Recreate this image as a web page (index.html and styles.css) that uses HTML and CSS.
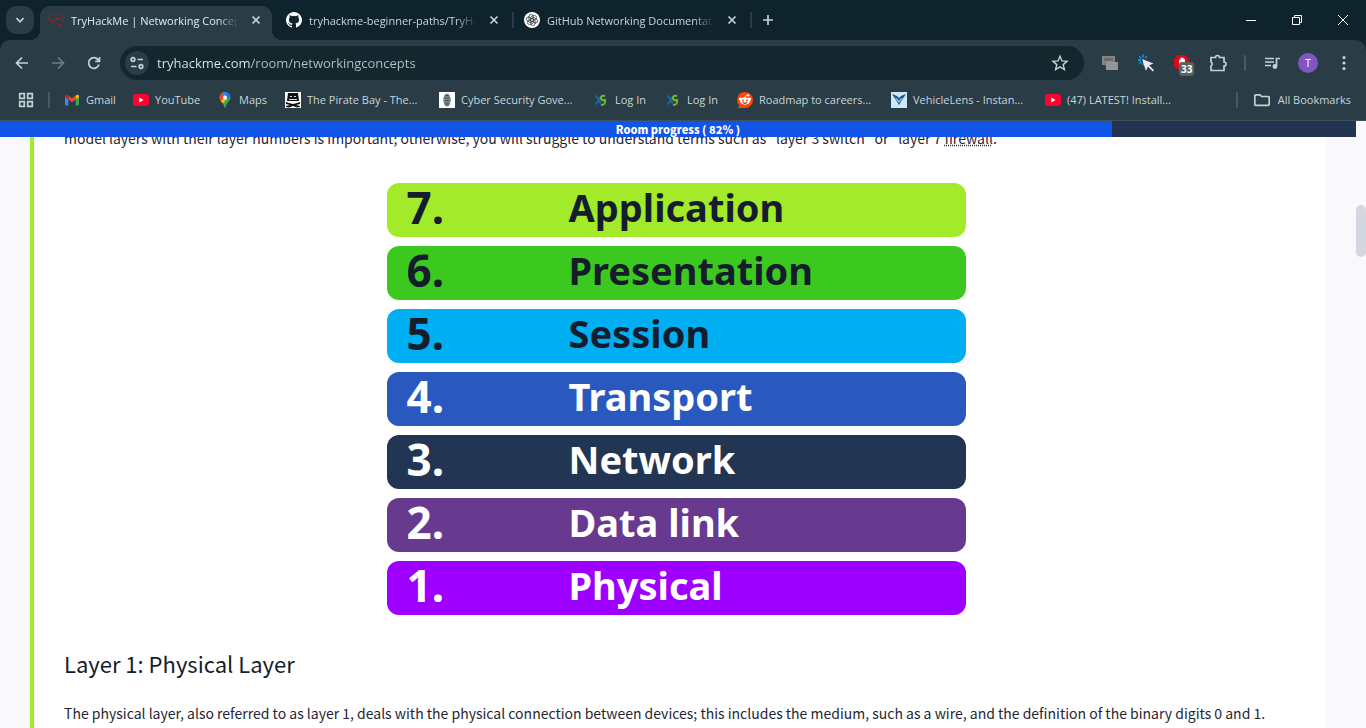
FILE: index.html
```html
<!DOCTYPE html>
<html lang="en">
<head>
<meta charset="utf-8">
<title>TryHackMe | Networking Concepts</title>
<link rel="stylesheet" href="styles.css">
</head>
<body>
<header class="browser">
  <div class="tabstrip">
    <button class="tab-search" aria-label="Search tabs"><svg width="20" height="20" viewBox="0 0 20 20" class="line bold"><path d="M6.500 8.200 10 11.800l3.500-3.600"/></svg></button>
    <div class="tabs">
      <div class="tab active">
        <svg width="16" height="16" viewBox="0 0 16 16" fill="none" stroke="#8f2630" stroke-width="1"><path d="M1 8C-.2 5.500 1.800 3.500 4 4c1-3.500 6.500-3.500 7.500 0 3-.5 5 2 3.500 5M1 8h8M3 10.500h3M8 10.500l2 1M7 6.500h5l3 3M10 12.500h2M12 14.500l3 .5"/></svg>
        <span class="tab-title">TryHackMe | Networking Concepts</span>
        <button class="close" aria-label="Close tab"><svg width="16" height="16" viewBox="0 0 16 16" class="line bold"><path d="m4.500 4.500 7 7m0-7-7 7"/></svg></button>
      </div>
      <div class="tab">
        <svg width="16" height="16" viewBox="0 0 16 16" fill="#fff"><path d="M8 0a8 8 0 0 0-2.530 15.590c.4.070.55-.17.55-.38v-1.490c-2.230.48-2.700-.95-2.700-.95-.36-.92-.89-1.170-.89-1.170-.73-.5.060-.49.060-.49.800.060 1.230.830 1.230.830.710 1.220 1.870.870 2.330.660.070-.52.280-.87.500-1.070-1.770-.2-3.640-.89-3.640-3.950 0-.87.310-1.590.820-2.150-.08-.2-.36-1.020.080-2.120 0 0 .670-.21 2.200.820a7.600 7.600 0 0 1 4 0c1.530-1.030 2.200-.82 2.200-.82.440 1.100.160 1.920.080 2.120.510.560.820 1.280.820 2.150 0 3.070-1.870 3.750-3.650 3.950.290.250.540.730.540 1.480v2.190c0 .21.150.46.550.38A8 8 0 0 0 8 0"/></svg>
        <span class="tab-title">tryhackme-beginner-paths/TryHackMe</span>
        <button class="close" aria-label="Close tab"><svg width="16" height="16" viewBox="0 0 16 16" class="line bold"><path d="m4.500 4.500 7 7m0-7-7 7"/></svg></button>
      </div>
      <div class="tab">
        <svg width="16" height="16" viewBox="0 0 16 16"><circle cx="8" cy="8" r="8" fill="#fff"/><g fill="none" stroke="#222" stroke-width=".7"><path id="petal" d="M6.700 8.700V5.200l2.500-1.500a2.300 2.300 0 0 1 3.200 3L9.300 8.500"/><use href="#petal" transform="rotate(60 8 8)"/><use href="#petal" transform="rotate(120 8 8)"/><use href="#petal" transform="rotate(180 8 8)"/><use href="#petal" transform="rotate(240 8 8)"/><use href="#petal" transform="rotate(300 8 8)"/></g></svg>
        <span class="tab-title">GitHub Networking Documentation</span>
        <button class="close" aria-label="Close tab"><svg width="16" height="16" viewBox="0 0 16 16" class="line bold"><path d="m4.500 4.500 7 7m0-7-7 7"/></svg></button>
      </div>
      <button class="new-tab" aria-label="New tab"><svg width="16" height="16" viewBox="0 0 16 16" class="line bold"><path d="M8 3v10M3 8h10"/></svg></button>
    </div>
    <div class="window-controls">
      <button aria-label="Minimize"><svg width="12" height="12" viewBox="0 0 12 12" class="thin"><path d="M1 6.500h10"/></svg></button>
      <button aria-label="Restore"><svg width="12" height="12" viewBox="0 0 12 12" class="thin"><path d="M1.500 3.500h7v7h-7zM3.500 3.500v-2h7v7h-2"/></svg></button>
      <button aria-label="Close"><svg width="12" height="12" viewBox="0 0 12 12" class="thin"><path d="m1 1 10 10M11 1 1 11"/></svg></button>
    </div>
  </div>

  <div class="toolbar">
    <button aria-label="Back"><svg width="16" height="16" viewBox="0 0 16 16" class="line bold"><path d="M14 8H3M8 2.500 2.500 8 8 13.500"/></svg></button>
    <button aria-label="Forward" disabled><svg width="16" height="16" viewBox="0 0 16 16" class="line bold dim"><path d="M2 8h11M8 2.500 13.500 8 8 13.500"/></svg></button>
    <button aria-label="Reload"><svg width="16" height="16" viewBox="0 0 16 16" class="line bold"><path d="M13 9.500A5.300 5.300 0 1 1 12 4.600l1.300 1.400M13.500 2v4.300H9.200"/></svg></button>
    <div class="omnibox">
      <button class="site-info" aria-label="Site information"><svg width="16" height="16" viewBox="0 0 16 16" class="line bold"><circle cx="4" cy="4.500" r="1.800"/><path d="M8.500 4.500H14M2 11.500h5.500"/><circle cx="12" cy="11.500" r="1.800"/></svg></button>
      <input type="text" class="url" aria-label="Address" value="tryhackme.com/room/networkingconcepts">
      <button class="star" aria-label="Bookmark this page"><svg width="18" height="18" viewBox="0 0 18 18" class="line"><path d="m9 2.200 2 4.700 5.100.4-3.900 3.300 1.200 5L9 12.900l-4.400 2.700 1.200-5-3.900-3.300 5.100-.4z"/></svg></button>
    </div>
    <div class="extensions">
      <button aria-label="Windows extension"><svg width="16" height="14" viewBox="0 0 16 14"><path fill="#858585" d="M0 0h13v9H0z"/><path fill="#6b6b6b" d="M2 2h9v3H2z"/><path fill="#959595" d="M5 5h4l1 1h6v8H4V6z"/><path stroke="#777" d="M3.500 5v5M9 4.500h4"/></svg></button>
      <button aria-label="Click extension"><svg width="18" height="18" viewBox="0 0 18 18"><path d="M6 .5v3M1 6h3M2.300 2.300l2 2M9.700 2.300l-1.500 2M2.300 9.700l2-2M6 9v2.500" stroke="#1689df" stroke-width="1.800"/><path d="m5 5 11.500 4.500-4.300 1.800 4.800 5-1.200 1.200-4.900-5L9 17z" fill="#e9edf7"/></svg></button>
      <button class="blocker" aria-label="Ad blocker, 33 blocked"><svg width="18" height="18" viewBox="0 0 18 18"><path fill="#e30613" d="M5 1h7l4 4v7l-4 4H5l-4-4V5z"/><path fill="#fff" d="M6 12V6q1-1 1.500 0V4q1-1 1.500 0 1-1 1.500 0v1q1-.5 1.500.5V12l-2 2H8z"/></svg><span class="badge">33</span></button>
      <button aria-label="Extensions"><svg width="18" height="18" viewBox="0 0 18 18" class="line bold"><path d="M2 3.500h4.500a2 2 0 0 1 4 0H15V8a2 2 0 0 1 0 4v4.500H2V12a2.300 2.300 0 0 0 0-4z"/></svg></button>
      <span class="divider"></span>
      <button aria-label="Media controls"><svg width="16" height="16" viewBox="0 0 16 16" class="line bold"><path d="M1 3.500h9M1 7h9M1 10.500h6M12.500 11V3.500H16"/><circle cx="10.900" cy="11.500" r="1.600" fill="#c4d2d8"/></svg></button>
      <button aria-label="Profile"><span class="avatar">T</span></button>
      <button aria-label="Menu"><svg width="4" height="16" viewBox="0 0 4 16" fill="#c4d2d8"><circle cx="2" cy="2.500" r="1.600"/><circle cx="2" cy="8" r="1.600"/><circle cx="2" cy="13.500" r="1.600"/></svg></button>
    </div>
  </div>

  <nav class="bookmarks" aria-label="Bookmarks">
    <button class="apps" aria-label="Apps"><svg width="16" height="16" viewBox="0 0 16 16" class="line bold"><path d="M1.700 1.700h4.600v4.600H1.700zM9.700 1.700h4.600v4.600H9.700zM1.700 9.700h4.600v4.600H1.700zM9.700 9.700h4.600v4.600H9.700z"/></svg></button>
    <span class="divider"></span>
    <div class="bookmark-list">
      <a href="#"><svg width="16" height="16" viewBox="0 0 16 16"><path fill="#4285f4" d="M1 4.500l3.300 2.500v6.500H2a1 1 0 0 1-1-1z"/><path fill="#34a853" d="M15 4.500 11.700 7v6.500H14a1 1 0 0 0 1-1z"/><path fill="#ea4335" d="M4.300 3.500 8 6.300l3.700-2.800V7.500L8 10.300 4.300 7.500z"/><path fill="#c5221f" d="M1 4.200C1 2.500 2.700 2.200 4.300 3.500v4L1 5z"/><path fill="#fbbc04" d="M15 4.200c0-1.700-1.700-2-3.300-.7v4L15 5z"/></svg><span>Gmail</span></a>
      <a href="#"><svg width="16" height="16" viewBox="0 0 16 16"><rect y="2" width="16" height="12" rx="3" fill="#ff0033"/><path fill="#fff" d="M6.300 5.500v5l4.200-2.500z"/></svg><span>YouTube</span></a>
      <a href="#"><svg width="16" height="16" viewBox="0 0 16 16"><defs><clipPath id="pin"><path d="M8 0a5.500 5.500 0 0 0-5.500 5.600C2.500 9.500 7 11 7.300 15.300q.7 1.200 1.400 0C9 11 13.500 9.500 13.500 5.600A5.500 5.500 0 0 0 8 0"/></clipPath></defs><g clip-path="url(#pin)"><path fill="#34a853" d="M0 0h16v16H0z"/><path fill="#4285f4" d="M5 0h11L8 7z"/><path fill="#1a73e8" d="M9 0h5v4L8 8z"/><path fill="#ea4335" d="M0 0h5l3 5-5 5z"/><path fill="#fbbc04" d="m8 5-5 5 2 2 5-5z"/><circle cx="8" cy="5.500" r="2" fill="#fff"/></g></svg><span>Maps</span></a>
      <a href="#"><svg width="16" height="16" viewBox="0 0 16 16"><path fill="#fff" d="M0 0h16v16H0z"/><path fill="#111" d="M3 1h10l1 8H2zM1 10l3 1 4 1 4-1 3-1v2l-4 1 4 1v1l-3 .5-4-1.500-4 1.500L1 15v-1l4-1-4-1z"/><path fill="#ddd" d="M5 4h2v1H5zM9 4h2v1H9zM4 7h8v1H4z"/></svg><span>The Pirate Bay - The...</span></a>
      <a href="#"><svg width="16" height="16" viewBox="0 0 16 16"><path fill="#fff" d="M0 0h16v16H0z"/><ellipse cx="8" cy="8" rx="3.800" ry="6.500" fill="#7d8b90"/><path stroke="#3c4c51" fill="none" d="M6.500 3.500h3M5.500 6h5M6 8.500h4M7 10.500v3M9 10.500v3"/></svg><span>Cyber Security Gove...</span></a>
      <a href="#"><svg width="16" height="16" viewBox="0 0 16 16" fill="none" stroke-width="2"><path stroke="#1767ae" d="M2.500 3.500 6 8l-3.500 4.500M8 4.500 5.500 8 8 12"/><path stroke="#75b72b" d="M12 4Q8 3 8 6t4 2q1 5-4 5"/></svg><span>Log In</span></a>
      <a href="#"><svg width="16" height="16" viewBox="0 0 16 16" fill="none" stroke-width="2"><path stroke="#1767ae" d="M2.500 3.500 6 8l-3.500 4.500M8 4.500 5.500 8 8 12"/><path stroke="#75b72b" d="M12 4Q8 3 8 6t4 2q1 5-4 5"/></svg><span>Log In</span></a>
      <a href="#"><svg width="16" height="16" viewBox="0 0 16 16"><path fill="#ff4500" d="M8 0a8 8 0 1 1 0 16H.5l2-2.300A8 8 0 0 1 8 0"/><circle cx="3.400" cy="7" r="1.600" fill="#fff"/><circle cx="12.600" cy="7" r="1.600" fill="#fff"/><circle cx="11" cy="3.300" r="1.200" fill="#fff"/><path d="M8 5.500q0-2 2-2.200" stroke="#fff" stroke-width=".8" fill="none"/><ellipse cx="8" cy="9" rx="5" ry="3.700" fill="#fff"/><circle cx="6" cy="8.500" r="1" fill="#ff4500"/><circle cx="10" cy="8.500" r="1" fill="#ff4500"/><path d="M5.800 10.600q2.200 1.400 4.400 0" stroke="#222" fill="none"/></svg><span>Roadmap to careers...</span></a>
      <a href="#"><svg width="16" height="16" viewBox="0 0 16 16"><path fill="#cfe8f8" d="M0 0h16v16H0z"/><path fill="#1c4d85" d="m1 2 5 2 2 2 2-2 5-2-4 6-3 5-3-5z"/><path fill="#78bde8" d="m4 5 3 2 1 2 1-2 3-2-2 4-2 2-2-2z"/></svg><span>VehicleLens - Instan...</span></a>
      <a href="#"><svg width="16" height="16" viewBox="0 0 16 16"><rect y="2" width="16" height="12" rx="3" fill="#ff0033"/><path fill="#fff" d="M6.300 5.500v5l4.200-2.500z"/></svg><span>(47) LATEST! Install...</span></a>
    </div>
    <span class="divider"></span>
    <button class="all-bookmarks"><svg width="16" height="16" viewBox="0 0 16 16" class="line bold"><path d="M.8 4q0-1.200 1.200-1.200h4l1.700 1.700H14q1.200 0 1.200 1.200v6.500q0 1.100-1.200 1.100H2q-1.200 0-1.200-1.100z"/></svg><span>All Bookmarks</span></button>
  </nav>
</header>

<main class="viewport">
  <div class="progress" role="progressbar" aria-valuenow="82" aria-valuemin="0" aria-valuemax="100">
    <div class="progress-fill" style="width: 82%"></div>
    <span class="progress-label">Room progress ( 82% )</span>
  </div>
  <article class="room">
    <p>model layers with their layer numbers is important; otherwise, you will struggle to understand terms such as "layer 3 switch" or "layer 7 <abbr title="Network security device">firewall</abbr>."</p>
    <ul class="layers">
      <li class="application"><span class="number">7.</span><span>Application</span></li>
      <li class="presentation"><span class="number">6.</span><span>Presentation</span></li>
      <li class="session"><span class="number">5.</span><span>Session</span></li>
      <li class="transport"><span class="number">4.</span><span>Transport</span></li>
      <li class="network"><span class="number">3.</span><span>Network</span></li>
      <li class="datalink"><span class="number">2.</span><span>Data link</span></li>
      <li class="physical"><span class="number">1.</span><span>Physical</span></li>
    </ul>
    <h2>Layer 1: Physical Layer</h2>
    <p>The physical layer, also referred to as layer 1, deals with the physical connection between devices; this includes the medium, such as a wire, and the definition of the binary digits 0 and 1.</p>
  </article>
  <div class="scrollbar"><div class="thumb"></div></div>
</main>
</body>
</html>
```
FILE: styles.css
```css
* { box-sizing: border-box; }

body {
  margin: 0;
  height: 100vh;
  overflow: hidden;
  display: flex;
  flex-direction: column;
  font-family: "Open Sans", "Noto Sans", sans-serif;
  font-size: 11px;
  color: #c9d5da;
  background: #0e232b;
}

button {
  display: flex;
  align-items: center;
  justify-content: center;
  padding: 0;
  border: 0;
  background: none;
  font: inherit;
  color: inherit;
}

svg { flex: none; display: block; }
.line { fill: none; stroke: #c4d2d8; stroke-width: 1.4; }
.bold { stroke-width: 1.7; }
.dim { stroke: #6d7e86; }
.thin { fill: none; stroke: #fff; stroke-width: 1; }

.divider {
  width: 2px;
  height: 16px;
  border-radius: 1px;
  background: #48596a;
}

/* Tab strip */
.tabstrip {
  height: 40px;
  padding: 6px 0 0 6px;
  display: flex;
  gap: 6px;
}
.tab-search {
  width: 28px;
  height: 28px;
  border-radius: 10px;
  background: #2a3c45;
}
.tabs { flex: 1; display: flex; gap: 6px; min-width: 0; }
.tab {
  position: relative;
  width: 232px;
  height: 28px;
  padding: 0 8px;
  display: flex;
  align-items: center;
  gap: 7px;
}
.tab:not(.active)::after {
  content: "";
  position: absolute;
  right: -4px;
  top: 6px;
  width: 2px;
  height: 16px;
  background: #2a3c45;
}
.tab.active {
  height: 34px;
  padding-bottom: 6px;
  border-radius: 10px 10px 0 0;
  background: #2a3c45;
  color: #e3ebee;
}
.tab.active::before,
.tab.active::after {
  content: "";
  position: absolute;
  bottom: 0;
  width: 10px;
  height: 10px;
}
.tab.active::before { left: -10px; background: radial-gradient(circle at 0 0, transparent 10px, #2a3c45 10px); }
.tab.active::after { right: -10px; background: radial-gradient(circle at 100% 0, transparent 10px, #2a3c45 10px); }
.tab-title {
  flex: 1;
  overflow: hidden;
  white-space: nowrap;
  mask-image: linear-gradient(to right, #000 88%, transparent);
}
.close { width: 16px; height: 16px; margin-left: 3px; }
.new-tab { width: 28px; height: 28px; }
.window-controls { display: flex; }
.window-controls button { width: 46px; height: 28px; }

/* Toolbar */
.toolbar {
  height: 46px;
  padding: 6px 4px;
  display: flex;
  align-items: center;
  background: #2a3c45;
  border-radius: 10px 10px 0 0;
}
.toolbar > button, .extensions button { width: 36px; height: 34px; }
.omnibox {
  flex: 1;
  height: 34px;
  margin: 0 8px;
  padding: 0 12px 0 5px;
  display: flex;
  align-items: center;
  gap: 8px;
  border-radius: 17px;
  background: #14272f;
}
.site-info { width: 24px; height: 24px; border-radius: 50%; background: #2a3c45; }
.star { width: 24px; height: 24px; }
.url {
  flex: 1;
  min-width: 0;
  padding: 0;
  border: 0;
  outline: 0;
  font: 13px "Open Sans", "Noto Sans", sans-serif;
  color: transparent;
  background: linear-gradient(to right, #e3ebee 93px, #b4c3ca 93px);
  background-clip: text;
}
.extensions { display: flex; align-items: center; }
.extensions .divider { margin: 0 8px; }
.blocker { position: relative; }
.badge {
  position: absolute;
  left: 15px;
  top: 16px;
  padding: 0 2px;
  border-radius: 3px;
  background: #5d6164;
  color: #fff;
  font-size: 10px;
  font-weight: 700;
  line-height: 14px;
}
.avatar {
  width: 20px;
  height: 20px;
  border-radius: 50%;
  background: #7e57c2;
  color: #fff;
  line-height: 20px;
  text-align: center;
}

/* Bookmarks bar */
.bookmarks {
  height: 35px;
  padding: 0 15px 7px 12px;
  display: flex;
  align-items: center;
  background: #2a3c45;
  border-bottom: 1px solid #40515a;
}
.apps { width: 28px; height: 28px; margin-right: 8px; }
.bookmark-list {
  flex: 1;
  margin-left: 14px;
  display: grid;
  grid-template-columns: 69px 84px 68px 154px 154px 72px 72px 154px 154px 1fr;
}
.bookmark-list a, .all-bookmarks {
  display: flex;
  align-items: center;
  gap: 6px;
  color: inherit;
  text-decoration: none;
  white-space: nowrap;
}
.all-bookmarks { margin-left: 16px; gap: 8px; }

/* Page */
.viewport {
  position: relative;
  flex: 1;
  min-height: 0;
  display: flex;
  background: #f9f9fb;
  font-family: "Noto Sans CJK SC", sans-serif;
}
.progress {
  position: absolute;
  top: 0;
  left: 0;
  right: 10px;
  height: 16px;
  background: #22344f;
}
.progress-fill { height: 100%; background: #1254e8; }
.progress-label {
  position: absolute;
  inset: 0;
  color: #fff;
  font-size: 11px;
  font-weight: 900;
  line-height: 16px;
  text-align: center;
}
.room {
  flex: 1;
  min-width: 0;
  margin: 0 30px;
  padding: 5px 38px 0 30px;
  border-left: 4px solid #a3ea2a;
  background: #fff;
  overflow: hidden;
}
.room p {
  margin: 0;
  font-size: 14px;
  line-height: 24px;
  color: #1f2733;
  white-space: nowrap;
}
.room abbr { text-decoration: underline dotted; }
.room h2 {
  margin: 32px 0 22px;
  font-size: 22px;
  font-weight: 400;
  line-height: 32px;
  color: #151c2b;
}
.layers {
  width: 579px;
  max-width: 100%;
  margin: 33px auto 30px;
  padding: 0;
  list-style: none;
  display: flex;
  flex-direction: column;
  gap: 9px;
}
.layers li {
  height: 54px;
  padding: 0 0 5px 20px;
  display: grid;
  grid-template-columns: 162px 1fr;
  align-items: center;
  border-radius: 12px;
  font-family: "Noto Sans", sans-serif;
  font-size: 38px;
  font-weight: 700;
  line-height: 49px;
  color: #fff;
}
.layers .number { font-size: 44px; }
.layers .application { background: #a3ea2a; color: #151c2b; }
.layers .presentation { background: #3cc91f; color: #151c2b; }
.layers .session { background: #00aef2; color: #151c2b; }
.layers .transport { background: #2959be; }
.layers .network { background: #223552; }
.layers .datalink { background: #673a90; }
.layers .physical { background: #9d00ff; }

.scrollbar { width: 10px; padding-top: 84px; }
.thumb { height: 52px; border-radius: 5px; background: #d2d7e0; }
```
